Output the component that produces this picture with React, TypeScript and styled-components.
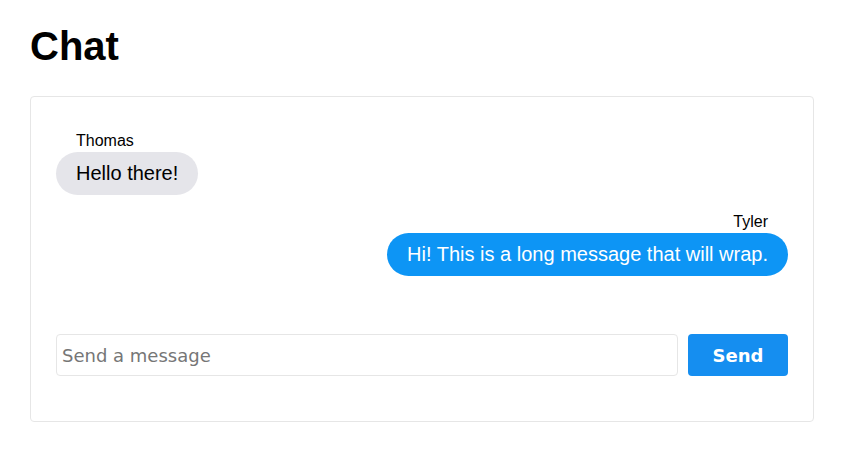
import styled, { createGlobalStyle } from "styled-components";

const GlobalStyle = createGlobalStyle`
    body {
        margin: 0;
        background: #ffffff;
        font-family: "Liberation Sans", Arial, sans-serif;
    }
`;

type Message = { id: number; author: string; text: string; mine: boolean };

const messages: Message[] = [
    { id: 1, author: "Thomas", text: "Hello there!", mine: false },
    { id: 2, author: "Tyler", text: "Hi! This is a long message that will wrap.", mine: true },
];

export default function App() {
    return (
        <>
            <GlobalStyle />
            <Page>
                <Title>Chat</Title>
                <Card>
                    <MessageList>
                        {messages.map((m) => (
                            <MessageGroup key={m.id} $mine={m.mine}>
                                <Author>{m.author}</Author>
                                <Bubble $mine={m.mine}>{m.text}</Bubble>
                            </MessageGroup>
                        ))}
                    </MessageList>
                    <Composer>
                        <Input placeholder="Send a message" />
                        <SendButton>Send</SendButton>
                    </Composer>
                </Card>
            </Page>
        </>
    );
}

const Page = styled.div`
    padding: 23px 28px 0 30px;
`;

const Title = styled.h1`
    margin: 0 0 27px;
    font-size: 40px;
    line-height: 46px;
    font-weight: bold;
    color: #000;
`;

const Card = styled.div`
    border: 1px solid #e6e6e6;
    border-radius: 4px;
    padding: 35px 25px 45px;
`;

const MessageList = styled.div`
    display: flex;
    flex-direction: column;
    gap: 18px;
    margin-bottom: 58px;
`;

const MessageGroup = styled.div<{ $mine: boolean }>`
    display: flex;
    flex-direction: column;
    align-items: ${(p) => (p.$mine ? "flex-end" : "flex-start")};
`;

const Author = styled.div`
    font-size: 16px;
    line-height: 18px;
    color: #000;
    padding: 0 20px;
    margin-bottom: 2px;
`;

const Bubble = styled.div<{ $mine: boolean }>`
    background: ${(p) => (p.$mine ? "#0d95f5" : "#e5e5ea")};
    color: ${(p) => (p.$mine ? "#ffffff" : "#000000")};
    font-size: 20px;
    line-height: 23px;
    padding: 10px 20px;
    border-radius: 22px;
`;

const Composer = styled.div`
    display: flex;
    gap: 10px;
`;

const Input = styled.input`
    flex: 1;
    height: 42px;
    box-sizing: border-box;
    border: 1px solid #e6e6e6;
    border-radius: 4px;
    padding: 0 5px;
    font-family: "DejaVu Sans", Verdana, sans-serif;
    font-size: 18px;
    outline: none;

    &::placeholder {
        color: #767676;
    }
`;

const SendButton = styled.button`
    width: 100px;
    height: 42px;
    border: none;
    border-radius: 4px;
    background: #158ef0;
    color: #ffffff;
    font-family: "DejaVu Sans", Verdana, sans-serif;
    font-size: 18px;
    font-weight: bold;
    cursor: pointer;
`;
